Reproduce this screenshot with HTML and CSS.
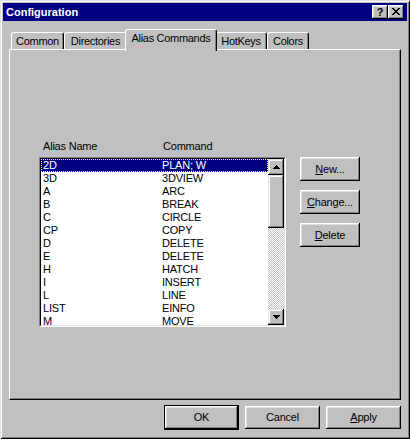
FILE: index.html
```html
<!DOCTYPE html>
<html>
<head>
<meta charset="utf-8">
<title>Configuration</title>
<link rel="stylesheet" href="styles.css">
</head>
<body>
<div class="window">
  <div class="titlebar">
    <span class="title">Configuration</span>
    <span class="capbtn help">?</span>
    <span class="capbtn close"><svg width="8" height="7" viewBox="0 0 8 7"><path d="M0 0h2v1h-2z M6 0h2v1h-2z M1 1h2v1h-2z M5 1h2v1h-2z M2 2h4v1h-4z M3 3h2v1h-2z M2 4h4v1h-4z M1 5h2v1h-2z M5 5h2v1h-2z M0 6h2v1h-2z M6 6h2v1h-2z" fill="#000"/></svg></span>
  </div>
  <div class="content">
    <div class="tabs">
      <div class="tab w-common">Common</div>
      <div class="tab w-dirs">Directories</div>
      <div class="tab w-alias active">Alias Commands</div>
      <div class="tab w-hot">HotKeys</div>
      <div class="tab w-colors">Colors</div>
    </div>
    <div class="panel">
      <div class="labels"><span class="lc1">Alias Name</span><span>Command</span></div>
      <div class="listrow">
        <div class="listbox">
          <div class="listinner">
            <div class="items">
              <div class="row selected"><span class="c1">2D</span><span>PLAN; W</span></div>
              <div class="row"><span class="c1">3D</span><span>3DVIEW</span></div>
              <div class="row"><span class="c1">A</span><span>ARC</span></div>
              <div class="row"><span class="c1">B</span><span>BREAK</span></div>
              <div class="row"><span class="c1">C</span><span>CIRCLE</span></div>
              <div class="row"><span class="c1">CP</span><span>COPY</span></div>
              <div class="row"><span class="c1">D</span><span>DELETE</span></div>
              <div class="row"><span class="c1">E</span><span>DELETE</span></div>
              <div class="row"><span class="c1">H</span><span>HATCH</span></div>
              <div class="row"><span class="c1">I</span><span>INSERT</span></div>
              <div class="row"><span class="c1">L</span><span>LINE</span></div>
              <div class="row"><span class="c1">LIST</span><span>EINFO</span></div>
              <div class="row"><span class="c1">M</span><span>MOVE</span></div>
            </div>
            <div class="scrollbar">
              <div class="sbtn"><svg width="7" height="4" viewBox="0 0 7 4"><path d="M3 0h1v1h-1z M2 1h3v1h-3z M1 2h5v1h-5z M0 3h7v1h-7z" fill="#000"/></svg></div>
              <div class="thumb"></div>
              <div class="track"></div>
              <div class="sbtn"><svg width="7" height="4" viewBox="0 0 7 4"><path d="M0 0h7v1h-7z M1 1h5v1h-5z M2 2h3v1h-3z M3 3h1v1h-1z" fill="#000"/></svg></div>
            </div>
          </div>
        </div>
        <div class="sidebtns">
          <div class="btn"><span><u>N</u>ew...</span></div>
          <div class="btn"><span><u>C</u>hange...</span></div>
          <div class="btn"><span><u>D</u>elete</span></div>
        </div>
      </div>
    </div>
    <div class="footer">
      <div class="btn wide default">OK</div>
      <div class="btn wide">Cancel</div>
      <div class="btn wide"><span><u>A</u>pply</span></div>
    </div>
  </div>
</div>
</body>
</html>
```
FILE: styles.css
```css
* { box-sizing: border-box; }
body {
  margin: 0;
  background: #c0c0c0;
  font-family: "Liberation Sans", Arial, sans-serif;
  font-size: 11px;
  color: #000;
}
.window {
  width: 410px;
  height: 439px;
  padding: 3px;
  background: #c0c0c0;
  display: flex;
  flex-direction: column;
  box-shadow: inset 1px 1px #dfdfdf, inset -1px -1px #000, inset 2px 2px #fff, inset -2px -2px #808080;
}
.titlebar {
  height: 18px;
  background: #000080;
  display: flex;
  align-items: center;
  padding: 0 3px;
}
.title {
  flex: 1;
  color: #fff;
  font-weight: bold;
  font-size: 11px;
  line-height: 18px;
}
.capbtn {
  width: 16px;
  height: 14px;
  display: flex;
  align-items: center;
  justify-content: center;
  background: #c0c0c0;
  box-shadow: inset -1px -1px #000, inset 1px 1px #fff, inset -2px -2px #808080, inset 2px 2px #dfdfdf;
  font-weight: bold;
  font-size: 11px;
  line-height: 14px;
}
.capbtn.close svg { display: block; margin-top: -1px; }
.content {
  flex: 1;
  display: flex;
  flex-direction: column;
  padding: 8px 6px 0;
}
.tabs {
  display: flex;
  align-items: flex-end;
  height: 20px;
  padding-left: 2px;
  position: relative;
  z-index: 2;
}
.tab {
  height: 17px;
  display: flex;
  justify-content: center;
  padding-top: 2px;
  line-height: 13px;
  letter-spacing: -0.3px;
  border-top: 1px solid #fff;
  border-left: 1px solid #fff;
  border-right: 1px solid #000;
  border-radius: 3px 3px 0 0;
  box-shadow: inset -1px 0 #808080;
  background: #c0c0c0;
  white-space: nowrap;
}
.w-common { width: 53px; }
.w-dirs { width: 63px; }
.w-alias { width: 92px; }
.w-hot { width: 52px; }
.w-colors { width: 42px; }
.tab.active {
  height: 22px;
  margin: 0 -2px -2px;
  position: relative;
  z-index: 1;
}
.panel {
  width: 392px;
  height: 351px;
  border: 1px solid;
  border-color: #fff #000 #000 #fff;
  box-shadow: inset -1px -1px #808080;
  padding-top: 90px;
}
.labels {
  display: flex;
  height: 13px;
  line-height: 13px;
  margin-left: 33px;
  letter-spacing: -0.2px;
}
.lc1 { width: 120px; }
.listrow {
  display: flex;
  margin-top: 4px;
}
.listbox {
  margin-left: 29px;
  width: 247px;
  height: 170px;
  border: 1px solid;
  border-color: #808080 #fff #fff #808080;
  display: flex;
}
.listinner {
  flex: 1;
  display: flex;
  border: 1px solid;
  border-color: #000 #dfdfdf #dfdfdf #000;
  background: #fff;
  overflow: hidden;
}
.items {
  flex: 1;
  overflow: hidden;
}
.row {
  display: flex;
  height: 13px;
  line-height: 13px;
  padding-left: 2px;
  white-space: nowrap;
  letter-spacing: -0.2px;
}
.row .c1 { width: 119px; }
.row.selected {
  background: #000080;
  color: #fff;
  outline: 1px dotted #ffff80;
  outline-offset: -1px;
}
.scrollbar {
  width: 16px;
  display: flex;
  flex-direction: column;
  background: #c0c0c0;
}
.sbtn {
  height: 16px;
  display: flex;
  align-items: center;
  justify-content: center;
  background: #c0c0c0;
  box-shadow: inset -1px -1px #000, inset 1px 1px #dfdfdf, inset -2px -2px #808080, inset 2px 2px #fff;
}
.sbtn svg { display: block; }
.thumb {
  height: 53px;
  background: #c0c0c0;
  box-shadow: inset -1px -1px #000, inset 1px 1px #dfdfdf, inset -2px -2px #808080, inset 2px 2px #fff;
}
.track {
  flex: 1;
  background-color: #fff;
  background-image: conic-gradient(#c0c0c0 25%, transparent 0 50%, #c0c0c0 0 75%, transparent 0);
  background-size: 2px 2px;
}
.sidebtns {
  margin-left: 14px;
  display: flex;
  flex-direction: column;
  gap: 9px;
}
.btn {
  width: 60px;
  height: 24px;
  display: flex;
  align-items: center;
  justify-content: center;
  background: #c0c0c0;
  box-shadow: inset -1px -1px #000, inset 1px 1px #fff, inset -2px -2px #808080, inset 2px 2px #dfdfdf;
  line-height: 13px;
  letter-spacing: -0.2px;
  white-space: nowrap;
}
.btn u { text-underline-offset: 1px; }
.footer {
  display: flex;
  justify-content: flex-end;
  align-items: center;
  gap: 6px;
  padding-top: 6px;
}
.btn.wide {
  width: 75px;
  height: 23px;
}
.btn.default {
  height: 25px;
  margin: -1px 0;
  border: 1px solid #000;
}
```
